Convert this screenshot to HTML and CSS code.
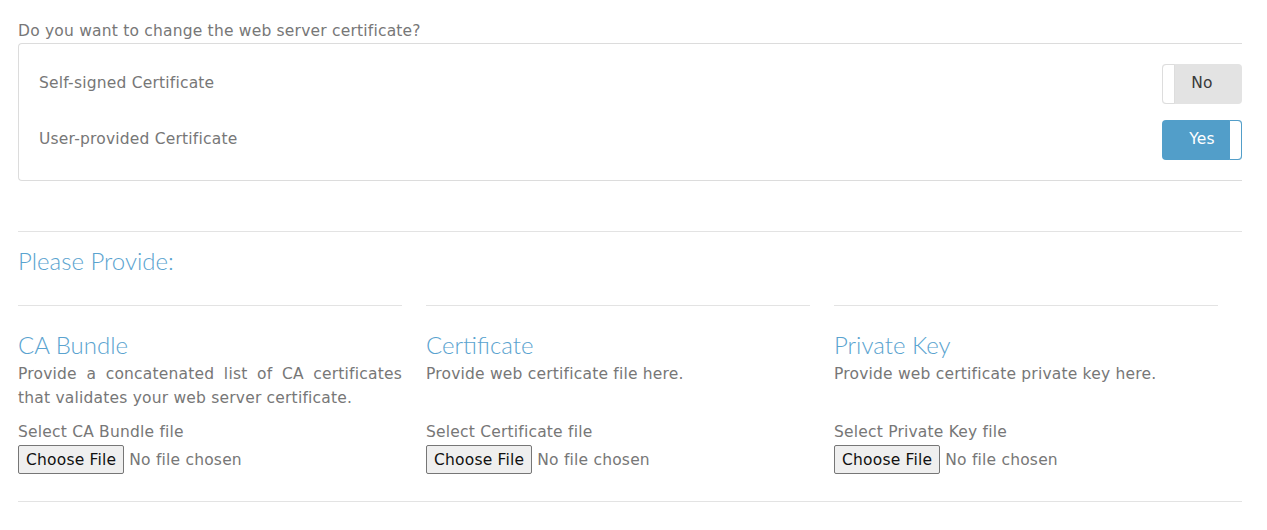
FILE: index.html
```html
<!DOCTYPE html>
<html lang="en">
<head>
<meta charset="utf-8">
<title>Web server certificate</title>
<link rel="stylesheet" href="styles.css">
</head>
<body>
<div class="page">
  <p class="question">Do you want to change the web server certificate?</p>
  <div class="choice-box">
    <div class="choice-row">
      <span class="choice-label">Self-signed Certificate</span>
      <span class="toggle toggle-off"><span class="knob"></span><span class="toggle-text">No</span></span>
    </div>
    <div class="choice-row">
      <span class="choice-label">User-provided Certificate</span>
      <span class="toggle toggle-on"><span class="toggle-text">Yes</span><span class="knob"></span></span>
    </div>
  </div>

  <hr class="divider divider-top">

  <h2 class="provide-title">Please Provide:</h2>

  <div class="columns">
    <div class="col">
      <h3 class="col-title">CA Bundle</h3>
      <p class="col-desc">Provide a concatenated list of CA certificates that validates your web server certificate.</p>
      <label class="file-label">Select CA Bundle file</label>
      <div class="file-field"><span class="file-btn">Choose File</span><span class="file-none">No file chosen</span></div>
    </div>
    <div class="col">
      <h3 class="col-title">Certificate</h3>
      <p class="col-desc">Provide web certificate file here.</p>
      <label class="file-label">Select Certificate file</label>
      <div class="file-field"><span class="file-btn">Choose File</span><span class="file-none">No file chosen</span></div>
    </div>
    <div class="col">
      <h3 class="col-title">Private Key</h3>
      <p class="col-desc">Provide web certificate private key here.</p>
      <label class="file-label">Select Private Key file</label>
      <div class="file-field"><span class="file-btn">Choose File</span><span class="file-none">No file chosen</span></div>
    </div>
  </div>

  <hr class="divider divider-bottom">
</div>
</body>
</html>
```

FILE: styles.css
```css
html, body {
  margin: 0;
  padding: 0;
  background: #ffffff;
}

body {
  font-family: "DejaVu Sans", "Liberation Sans", sans-serif;
  font-size: 15.5px;
  letter-spacing: 0.2px;
  color: #777777;
}

.page {
  width: 1224px;
  padding: 19px 0 0 18px;
}

.question {
  margin: 0;
  line-height: 24px;
}

.choice-box {
  border: 1px solid #dcdcdc;
  border-right: 0;
  border-radius: 4px 0 0 4px;
  padding: 20px 0 20px 20px;
  display: flex;
  flex-direction: column;
  gap: 16px;
}

.choice-row {
  display: flex;
  align-items: center;
  justify-content: space-between;
  height: 40px;
}

.choice-label {
  line-height: 24px;
  margin-top: -3px;
}

.toggle {
  width: 80px;
  height: 40px;
  box-sizing: border-box;
  border-radius: 4px;
  display: flex;
  align-items: center;
  justify-content: center;
  position: relative;
}

.toggle-off {
  background: #e3e3e3;
}

.toggle-on {
  background: #529ec9;
}

.toggle .knob {
  position: absolute;
  top: 0;
  bottom: 0;
  width: 13px;
  background: #ffffff;
  box-sizing: border-box;
}

.toggle-off .knob {
  left: 0;
  border: 1px solid #dddddd;
  border-radius: 4px 0 0 4px;
}

.toggle-on .knob {
  right: 0;
  border: 1px solid #529ec9;
  border-radius: 0 4px 4px 0;
}

.toggle-text {
  font-size: 15.5px;
  margin-top: -3px;
}

.toggle-off .toggle-text {
  color: #3a3a3a;
}

.toggle-on .toggle-text {
  color: #ffffff;
}

.divider {
  border: 0;
  border-top: 1px solid #e3e3e3;
  margin: 0;
}

.divider-top {
  margin-top: 50px;
}

.provide-title {
  margin: 14px 0 0 0;
  font-family: "Lato", "Liberation Sans", sans-serif;
  font-weight: 300;
  font-size: 24px;
  letter-spacing: 0;
  line-height: 30px;
  color: #5aa3cf;
}

.columns {
  display: grid;
  grid-template-columns: repeat(3, 384px);
  column-gap: 24px;
  margin-top: 29px;
}

.col {
  border-top: 1px solid #e3e3e3;
  padding-top: 24px;
}

.col-title {
  margin: 0;
  font-family: "Lato", "Liberation Sans", sans-serif;
  font-weight: 300;
  font-size: 24px;
  letter-spacing: 0;
  line-height: 30px;
  color: #5aa3cf;
}

.col-desc {
  margin: 2px 0 10px 0;
  line-height: 24px;
  min-height: 48px;
  text-align: justify;
}

.file-label {
  display: block;
  line-height: 24px;
}

.file-field {
  display: flex;
  align-items: center;
  margin-top: 1px;
}

.file-btn {
  height: 29px;
  box-sizing: border-box;
  padding: 0 7px;
  border: 1px solid #767676;
  border-radius: 2px;
  background: #efefef;
  color: #111111;
  display: flex;
  align-items: center;
}

.file-none {
  margin-left: 5px;
  color: #777777;
}

.divider-bottom {
  margin-top: 27px;
}
```
